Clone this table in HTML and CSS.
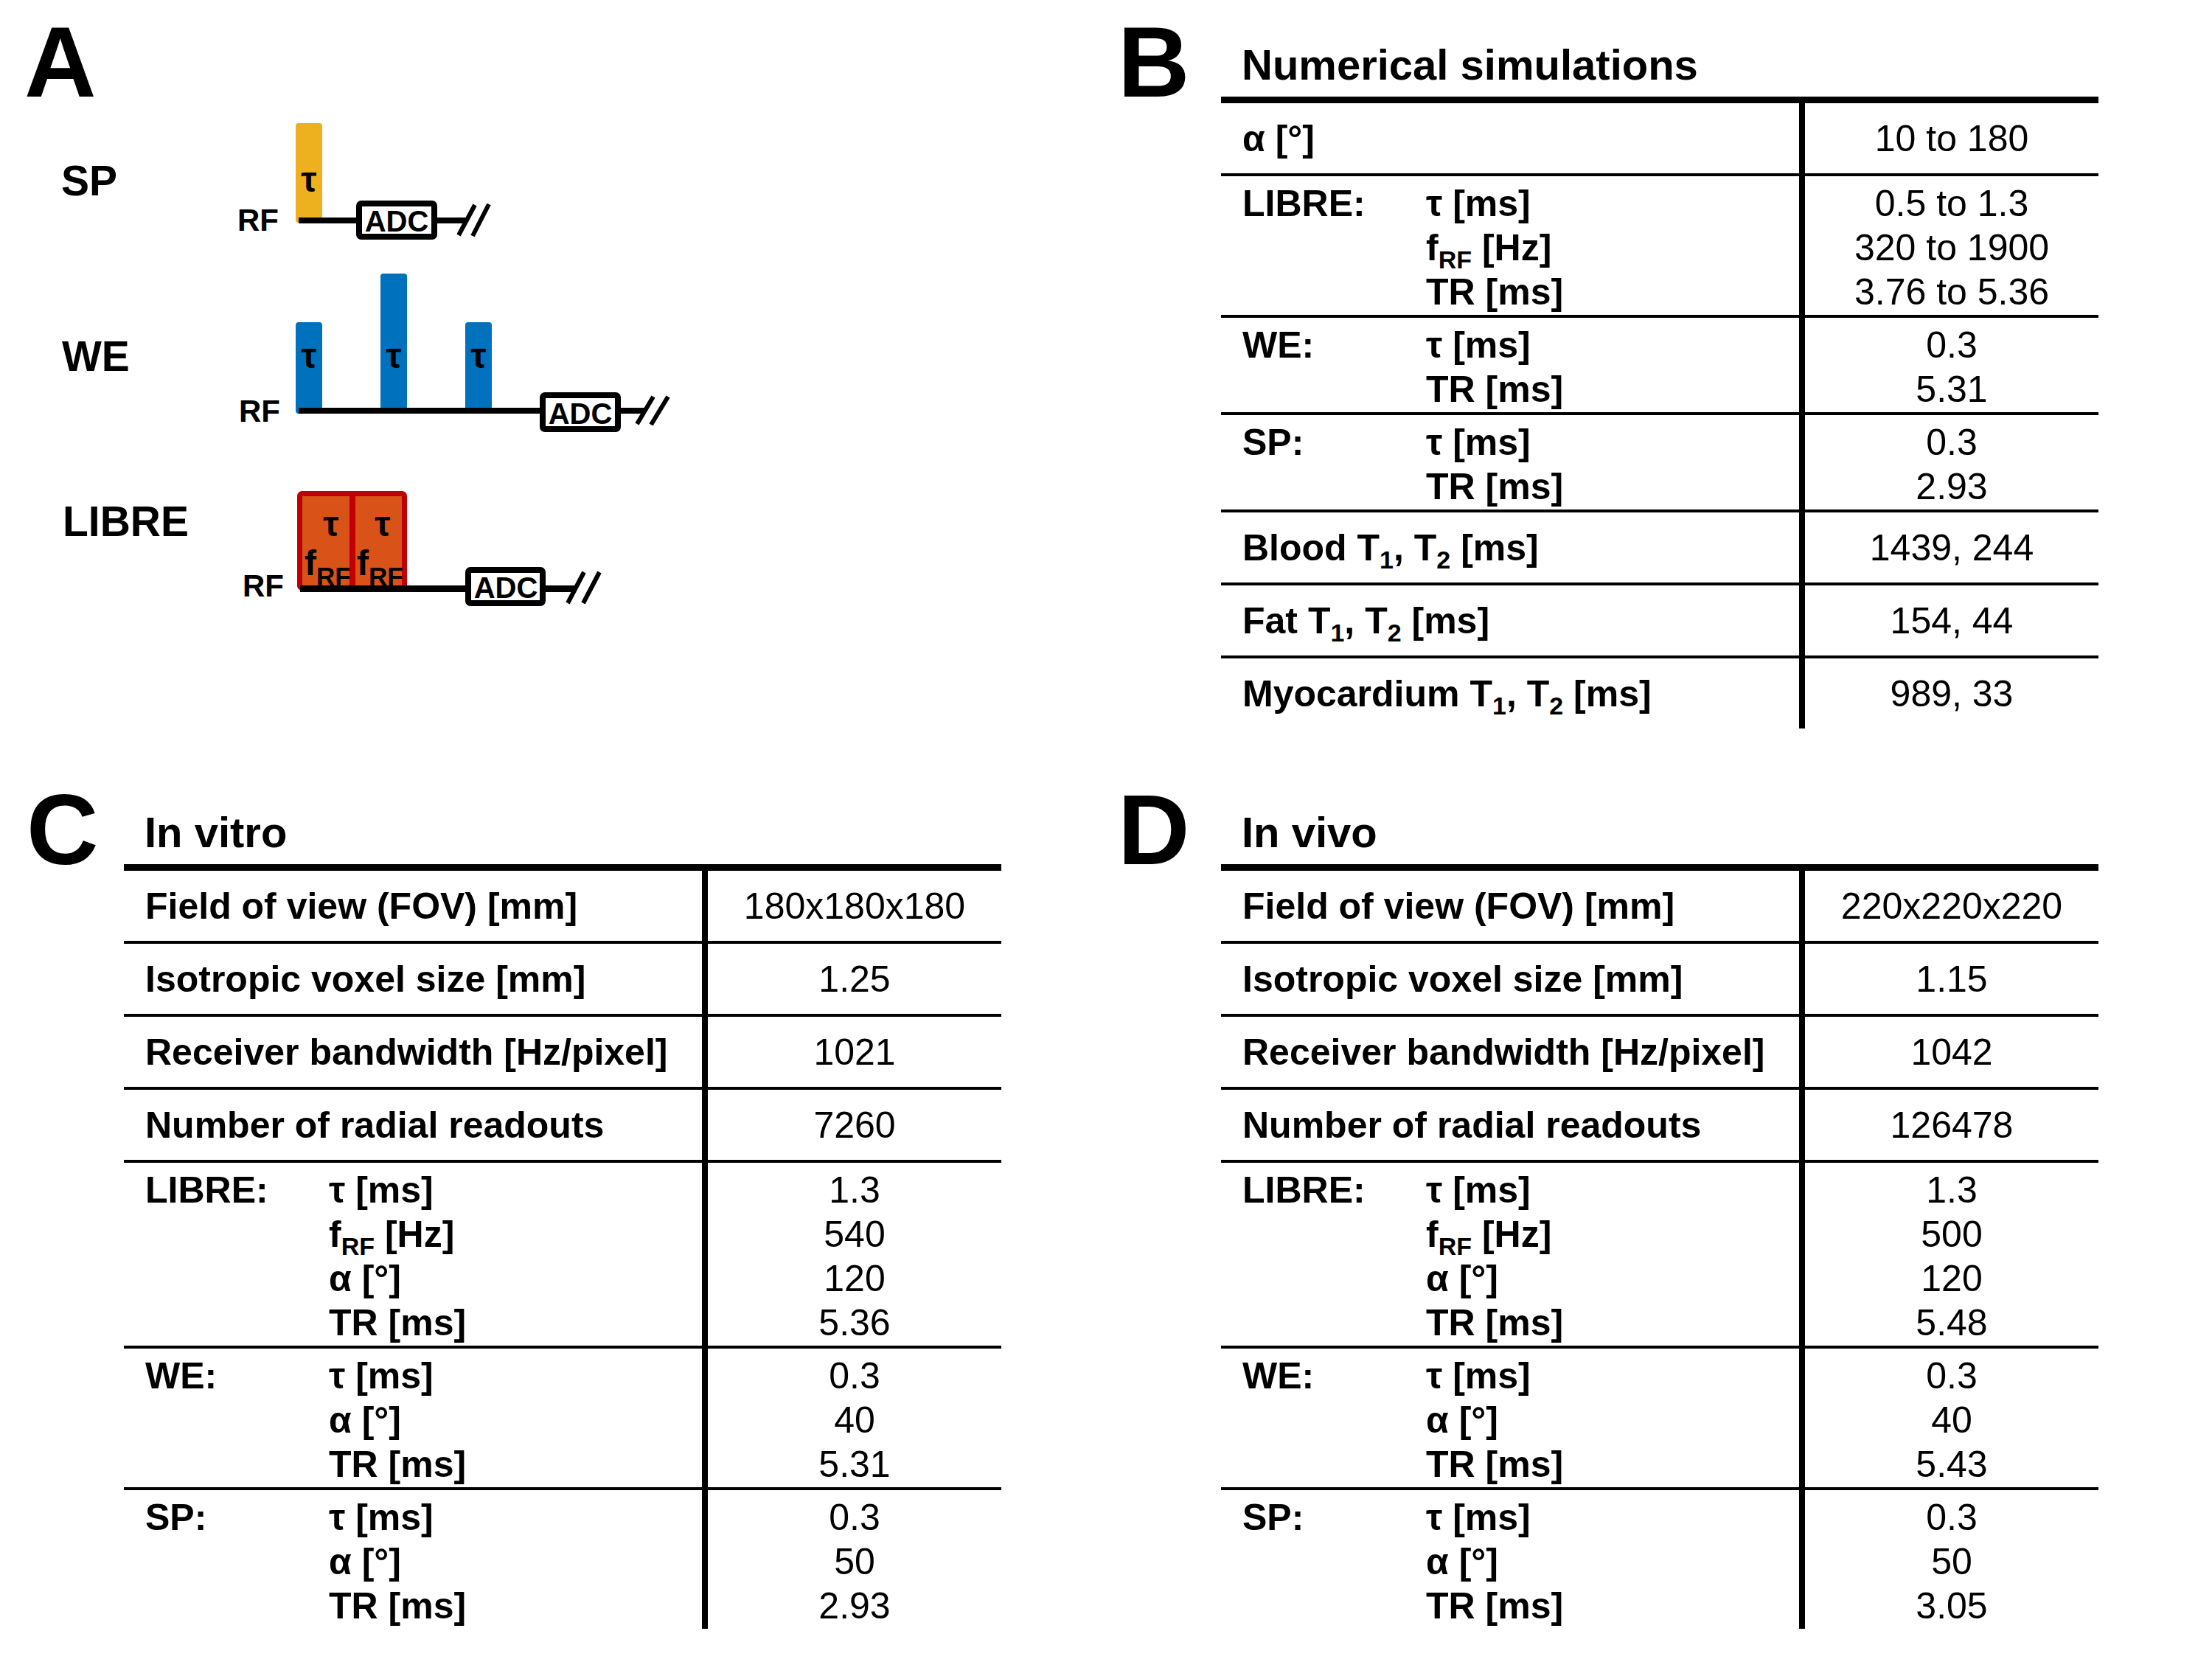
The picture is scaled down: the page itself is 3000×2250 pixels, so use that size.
FILE: index.html
```html
<!DOCTYPE html>
<html lang="en">
<head>
<meta charset="utf-8">
<title>LIBRE sequence parameters</title>
<link rel="stylesheet" href="styles.css">
</head>
<body>
<main class="page">
  <section class="panel panel-a">
    <svg class="diagram" width="1488" height="1041" viewBox="0 0 1488 1041" xmlns="http://www.w3.org/2000/svg">
      <text class="pl" x="33" y="131">A</text>
      <text class="seq" x="83" y="265">SP</text>
      <text class="seq" x="84" y="503">WE</text>
      <text class="seq" x="85" y="727">LIBRE</text>

      <!-- SP -->
      <text class="rf" x="322" y="313">RF</text>
      <rect x="401" y="167" width="36" height="135" rx="4" fill="#EDB120"/>
      <text class="tau" x="419" y="260">τ</text>
      <rect x="405" y="295" width="82" height="8" fill="#000"/>
      <rect x="487" y="276" width="102" height="45" rx="3" fill="#fff" stroke="#000" stroke-width="8"/>
      <text class="adc" x="538" y="314">ADC</text>
      <rect x="593" y="295" width="38" height="8" fill="#000"/>
      <line class="sl" x1="622" y1="319" x2="644" y2="278"/>
      <line class="sl" x1="641" y1="320" x2="663" y2="277"/>

      <!-- WE -->
      <text class="rf" x="324" y="572">RF</text>
      <rect x="401" y="437" width="36" height="124" rx="4" fill="#0072BD"/>
      <rect x="516" y="371" width="36" height="188" rx="4" fill="#0072BD"/>
      <rect x="631" y="437" width="36" height="122" rx="4" fill="#0072BD"/>
      <text class="tau" x="419" y="499">τ</text>
      <text class="tau" x="534" y="499">τ</text>
      <text class="tau" x="649" y="499">τ</text>
      <rect x="405" y="553" width="331" height="8" fill="#000"/>
      <rect x="736" y="536" width="102" height="46" rx="3" fill="#fff" stroke="#000" stroke-width="8"/>
      <text class="adc" x="787" y="575">ADC</text>
      <rect x="842" y="553" width="34" height="8" fill="#000"/>
      <line class="sl" x1="864" y1="575" x2="886" y2="538"/>
      <line class="sl" x1="883" y1="576" x2="906" y2="538"/>

      <!-- LIBRE -->
      <text class="rf" x="329" y="809">RF</text>
      <rect x="406.5" y="669.5" width="142" height="128" rx="3" fill="#D95319" stroke="#C00000" stroke-width="7"/>
      <text class="tau" x="449" y="727">τ</text>
      <text class="tau" x="519" y="727">τ</text>
      <text class="frf" x="413" y="780">f<tspan class="frf-sub" dy="14">RF</tspan></text>
      <text class="frf" x="484" y="780">f<tspan class="frf-sub" dy="14">RF</tspan></text>
      <rect x="474" y="666" width="8" height="135" fill="#C00000"/>
      <rect x="407" y="794" width="228" height="9" fill="#000"/>
      <rect x="635" y="773" width="101" height="45" rx="3" fill="#fff" stroke="#000" stroke-width="8"/>
      <text class="adc" x="686" y="811">ADC</text>
      <rect x="740" y="794" width="40" height="9" fill="#000"/>
      <line class="sl" x1="770" y1="818" x2="792" y2="776"/>
      <line class="sl" x1="791" y1="818" x2="813" y2="776"/>
    </svg>
  </section>

  <section class="panel tpanel">
    <div class="letter">B</div>
    <h2 class="title">Numerical simulations</h2>
    <div class="tbl">
      <div class="row single"><div class="lab">α [°]</div><div class="val">10 to 180</div></div>
      <div class="row multi">
        <div class="lab grp"><span>LIBRE:</span><div><div>τ [ms]</div><div>f<sub>RF</sub> [Hz]</div><div>TR [ms]</div></div></div>
        <div class="val"><div>0.5 to 1.3</div><div>320 to 1900</div><div>3.76 to 5.36</div></div>
      </div>
      <div class="row multi">
        <div class="lab grp"><span>WE:</span><div><div>τ [ms]</div><div>TR [ms]</div></div></div>
        <div class="val"><div>0.3</div><div>5.31</div></div>
      </div>
      <div class="row multi">
        <div class="lab grp"><span>SP:</span><div><div>τ [ms]</div><div>TR [ms]</div></div></div>
        <div class="val"><div>0.3</div><div>2.93</div></div>
      </div>
      <div class="row single"><div class="lab">Blood T<sub>1</sub>, T<sub>2</sub> [ms]</div><div class="val">1439, 244</div></div>
      <div class="row single"><div class="lab">Fat T<sub>1</sub>, T<sub>2</sub> [ms]</div><div class="val">154, 44</div></div>
      <div class="row single"><div class="lab">Myocardium T<sub>1</sub>, T<sub>2</sub> [ms]</div><div class="val">989, 33</div></div>
    </div>
  </section>

  <section class="panel tpanel">
    <div class="letter letter-c">C</div>
    <h2 class="title">In vitro</h2>
    <div class="tbl">
      <div class="row single"><div class="lab">Field of view (FOV) [mm]</div><div class="val">180x180x180</div></div>
      <div class="row single"><div class="lab">Isotropic voxel size [mm]</div><div class="val">1.25</div></div>
      <div class="row single"><div class="lab">Receiver bandwidth [Hz/pixel]</div><div class="val">1021</div></div>
      <div class="row single"><div class="lab">Number of radial readouts</div><div class="val">7260</div></div>
      <div class="row multi">
        <div class="lab grp"><span>LIBRE:</span><div><div>τ [ms]</div><div>f<sub>RF</sub> [Hz]</div><div>α [°]</div><div>TR [ms]</div></div></div>
        <div class="val"><div>1.3</div><div>540</div><div>120</div><div>5.36</div></div>
      </div>
      <div class="row multi">
        <div class="lab grp"><span>WE:</span><div><div>τ [ms]</div><div>α [°]</div><div>TR [ms]</div></div></div>
        <div class="val"><div>0.3</div><div>40</div><div>5.31</div></div>
      </div>
      <div class="row multi">
        <div class="lab grp"><span>SP:</span><div><div>τ [ms]</div><div>α [°]</div><div>TR [ms]</div></div></div>
        <div class="val"><div>0.3</div><div>50</div><div>2.93</div></div>
      </div>
    </div>
  </section>

  <section class="panel tpanel">
    <div class="letter">D</div>
    <h2 class="title">In vivo</h2>
    <div class="tbl">
      <div class="row single"><div class="lab">Field of view (FOV) [mm]</div><div class="val">220x220x220</div></div>
      <div class="row single"><div class="lab">Isotropic voxel size [mm]</div><div class="val">1.15</div></div>
      <div class="row single"><div class="lab">Receiver bandwidth [Hz/pixel]</div><div class="val">1042</div></div>
      <div class="row single"><div class="lab">Number of radial readouts</div><div class="val">126478</div></div>
      <div class="row multi">
        <div class="lab grp"><span>LIBRE:</span><div><div>τ [ms]</div><div>f<sub>RF</sub> [Hz]</div><div>α [°]</div><div>TR [ms]</div></div></div>
        <div class="val"><div>1.3</div><div>500</div><div>120</div><div>5.48</div></div>
      </div>
      <div class="row multi">
        <div class="lab grp"><span>WE:</span><div><div>τ [ms]</div><div>α [°]</div><div>TR [ms]</div></div></div>
        <div class="val"><div>0.3</div><div>40</div><div>5.43</div></div>
      </div>
      <div class="row multi">
        <div class="lab grp"><span>SP:</span><div><div>τ [ms]</div><div>α [°]</div><div>TR [ms]</div></div></div>
        <div class="val"><div>0.3</div><div>50</div><div>3.05</div></div>
      </div>
    </div>
  </section>
</main>
</body>
</html>
```

FILE: styles.css
```css
html, body {
  margin: 0;
  padding: 0;
  background: #ffffff;
}

body {
  font-family: "Liberation Sans", Arial, sans-serif;
  color: #000000;
}

.page {
  display: grid;
  grid-template-columns: 1488px 1512px;
  grid-template-rows: 1041px auto;
  width: 3000px;
}

.panel {
  min-width: 0;
}

/* Panel A diagram */
.diagram {
  display: block;
  font-family: "Liberation Sans", Arial, sans-serif;
  font-weight: bold;
}

.diagram .pl {
  font-size: 135px;
}

.diagram .seq {
  font-size: 57px;
}

.diagram .rf {
  font-size: 42px;
}

.diagram .tau {
  font-size: 48px;
  text-anchor: middle;
}

.diagram .adc {
  font-size: 40px;
  text-anchor: middle;
}

.diagram .frf {
  font-size: 48px;
}

.diagram .frf-sub {
  font-size: 35px;
}

.diagram .sl {
  stroke: #000000;
  stroke-width: 6;
}

/* Table panels */
.tpanel {
  display: grid;
  grid-template-columns: 168px 1190px;
  grid-template-rows: auto auto;
  align-content: start;
}

.letter {
  grid-column: 1;
  grid-row: 1 / span 2;
  align-self: start;
  margin-top: 17px;
  padding-left: 28px;
  font-size: 135px;
  line-height: 135px;
  font-weight: bold;
}

.letter-c {
  padding-left: 36px;
}

.title {
  grid-column: 2;
  grid-row: 1;
  margin: 59px 0 14px;
  padding-left: 28px;
  font-size: 58px;
  line-height: 58px;
  font-weight: bold;
}

.tbl {
  grid-column: 2;
  grid-row: 2;
  border-top: 9px solid #000000;
  font-size: 50px;
  line-height: 60px;
}

.row {
  display: flex;
}

.row + .row {
  border-top: 4px solid #000000;
}

.lab {
  box-sizing: border-box;
  width: 792px;
  flex: none;
  border-right: 8px solid #000000;
  padding-left: 29px;
  font-weight: bold;
  white-space: nowrap;
}

.lab.grp {
  display: grid;
  grid-template-columns: 249px auto;
}

.val {
  flex: 1;
  text-align: center;
  font-weight: normal;
  white-space: nowrap;
}

.row.single > .lab,
.row.single > .val {
  padding-top: 18px;
  padding-bottom: 17px;
}

.row.multi > .lab,
.row.multi > .val {
  padding-top: 7px;
  padding-bottom: 1px;
}

sub {
  font-size: 0.68em;
  line-height: 0;
  vertical-align: -11px;
}
```
